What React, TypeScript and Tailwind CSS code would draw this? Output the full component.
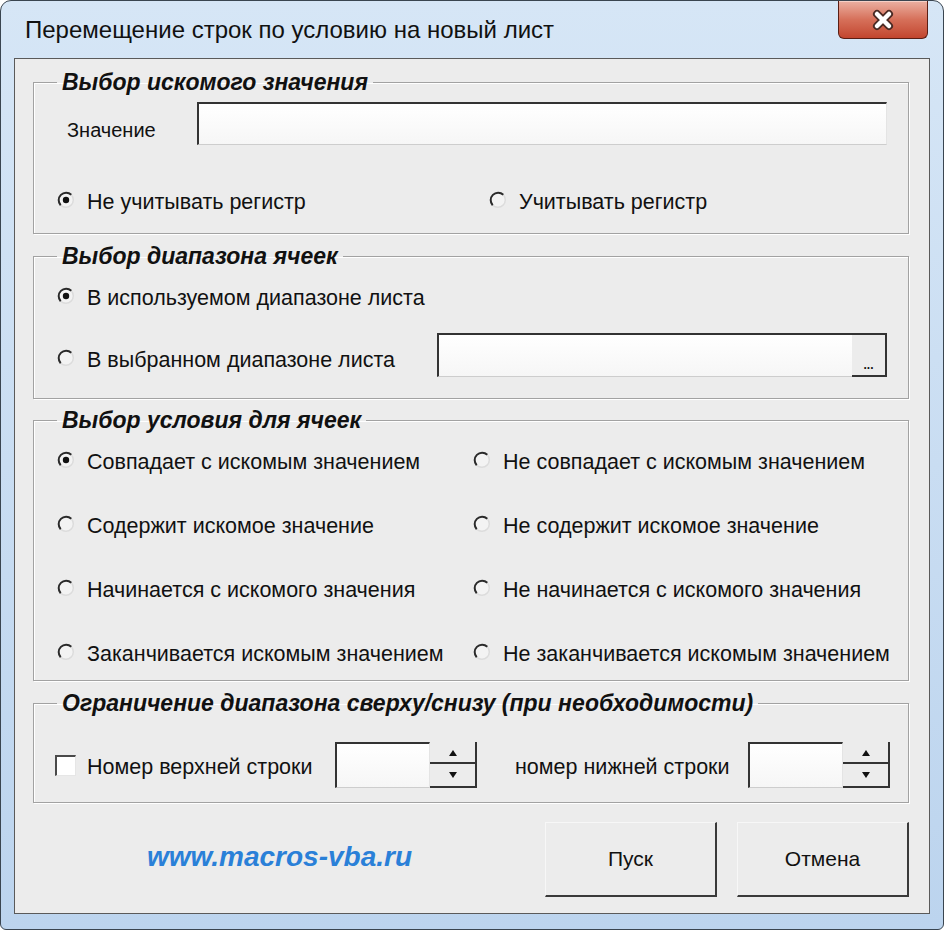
import { FC, ReactNode } from 'react'

const sunken =
  'border-t-2 border-l-2 border-r border-b border-t-[#333] border-l-[#333] border-r-[#e4e4e4] border-b-[#cdcdcd] bg-gradient-to-b from-white to-[#f6f6f6]'

const Radio: FC<{ checked?: boolean }> = ({ checked }) => (
  <svg width="18" height="18" viewBox="0 0 18 18" className="shrink-0">
    <circle cx="9" cy="9" r="7.5" fill="#f3f3f3" />
    <path d="M3.7 14.3 A7.5 7.5 0 0 0 14.3 3.7" fill="none" stroke="#dcdcdc" strokeWidth="1.5" />
    <path d="M14.3 3.7 A7.5 7.5 0 0 0 3.7 14.3" fill="none" stroke="#2a2a2a" strokeWidth="2" />
    {checked && <circle cx="9" cy="9" r="3.2" fill="#111" />}
  </svg>
)

const Option: FC<{ label: string; checked?: boolean; className?: string }> = ({
  label,
  checked,
  className = '',
}) => (
  <div className={`flex h-[30px] items-center gap-[12px] ${className}`}>
    <Radio checked={checked} />
    <span className="whitespace-nowrap pt-[4px]">{label}</span>
  </div>
)

const Group: FC<{ title: string; className: string; children: ReactNode }> = ({
  title,
  className,
  children,
}) => (
  <fieldset
    className={`border border-[#a2a2a2] shadow-[inset_1px_1px_0_#fff,1px_1px_0_#fff] ${className}`}
  >
    <legend className="ml-[23px] px-[5px] text-[23px] leading-[24px] font-bold italic text-[#111]">
      {title}
    </legend>
    {children}
  </fieldset>
)

const Triangle: FC<{ up?: boolean }> = ({ up }) => (
  <svg width="10" height="6" viewBox="0 0 10 6">
    <path d={up ? 'M1 6 L5 0 L9 6 Z' : 'M1 0 L9 0 L5 6 Z'} fill="#111" />
  </svg>
)

const SpinBox: FC = () => (
  <div className="flex h-[46px]">
    <div className={`w-[95px] ${sunken}`} />
    <div className="flex w-[47px] flex-col border-r-2 border-r-[#333] bg-[#ececec]">
      <div className="flex h-[22px] items-center justify-center border-b-2 border-b-[#333] pt-[2px]">
        <Triangle up />
      </div>
      <div className="flex h-[24px] items-center justify-center border-b-2 border-b-[#333]">
        <Triangle />
      </div>
    </div>
  </div>
)

const DialogButton: FC<{ label: string }> = ({ label }) => (
  <button
    type="button"
    className="flex h-[75px] w-[172px] items-center justify-center border-t border-l border-r-2 border-b-2 border-t-[#f7f7f7] border-l-[#f7f7f7] border-r-[#3a3a3a] border-b-[#3a3a3a] bg-[#ececec] text-[21px] text-[#111]"
  >
    {label}
  </button>
)

export default function App() {
  return (
    <div className="flex h-[930px] w-[944px] flex-col overflow-hidden rounded-t-[11px] rounded-b-[6px] border border-[#3a4550] bg-gradient-to-b from-[#d6e6f6] via-[#c9ddf2] to-[#bcd4ee] font-['Liberation_Sans',Arial,sans-serif] text-[#111]">
      <div className="flex h-[57px] shrink-0 items-start justify-between pr-[15px]">
        <div className="pl-[24px] pt-[15px] text-[24px] leading-[28px]">
          Перемещение строк по условию на новый лист
        </div>
        <div className="flex h-[38px] w-[90px] items-center justify-center rounded-b-[6px] border border-t-0 border-[#5a1e14] bg-gradient-to-b from-[#eab0a2] via-[#d6705a] to-[#c2452e] shadow-[inset_0_1px_0_#f6d0c6]">
          <svg width="24" height="22" viewBox="0 0 24 22">
            <path d="M6 5 L18 17 M18 5 L6 17" stroke="#4a2a24" strokeWidth="8" strokeLinecap="round" />
            <path d="M6 5 L18 17 M18 5 L6 17" stroke="#fff" strokeWidth="4.5" strokeLinecap="round" />
          </svg>
        </div>
      </div>

      <div className="mx-[13px] flex h-[856px] shrink-0 flex-col border border-[#5a5a5a] bg-[#ececec] pr-[20px] pl-[18px] text-[21.5px]">
        <Group title="Выбор искомого значения" className="mt-[11px] h-[164px]">
          <div className="flex flex-col pl-[23px]">
            <div className="mt-[8px] flex h-[43px] items-center">
              <span className="w-[140px] pt-[12px] pl-[10px] text-[20px]">Значение</span>
              <div className={`h-[43px] w-[690px] ${sunken}`} />
            </div>
            <div className="mt-[40px] flex">
              <Option label="Не учитывать регистр" checked className="w-[432px]" />
              <Option label="Учитывать регистр" />
            </div>
          </div>
        </Group>

        <Group title="Выбор диапазона ячеек" className="mt-[10px] h-[155px]">
          <div className="flex flex-col pl-[23px]">
            <Option label="В используемом диапазоне листа" checked className="mt-[13px]" />
            <div className="mt-[22px] flex h-[44px] items-center">
              <Option label="В выбранном диапазоне листа" className="w-[380px] pt-[6px]" />
              <div className="flex h-[44px] w-[450px]">
                <div className="flex-1 border-t-2 border-l-2 border-b border-t-[#333] border-l-[#333] border-b-[#cdcdcd] bg-gradient-to-b from-white to-[#f6f6f6]" />
                <div className="flex w-[35px] items-end justify-center border-t-2 border-r-2 border-b-2 border-t-[#333] border-r-[#333] border-b-[#333] bg-[#ececec] pb-[4px] text-[12px] leading-[12px] font-bold">
                  ...
                </div>
              </div>
            </div>
          </div>
        </Group>

        <Group title="Выбор условия для ячеек" className="mt-[9px] h-[273px]">
          <div className="mt-[13px] grid grid-cols-[416px_1fr] gap-y-[34px] pl-[23px]">
            <Option label="Совпадает с искомым значением" checked />
            <Option label="Не совпадает с искомым значением" />
            <Option label="Содержит искомое значение" />
            <Option label="Не содержит искомое значение" />
            <Option label="Начинается с искомого значения" />
            <Option label="Не начинается с искомого значения" />
            <Option label="Заканчивается искомым значением" />
            <Option label="Не заканчивается искомым значением" />
          </div>
        </Group>

        <Group
          title="Ограничение диапазона сверху/снизу (при необходимости)"
          className="mt-[10px] h-[112px]"
        >
          <div className="mt-[27px] flex h-[46px] items-center pl-[21px]">
            <div className="h-[21px] w-[21px] border-t-2 border-l-2 border-r border-b border-t-[#4a4a4a] border-l-[#4a4a4a] border-r-[#e6e6e6] border-b-[#e6e6e6] bg-white" />
            <span className="ml-[11px] w-[248px] pt-[4px]">Номер верхней строки</span>
            <SpinBox />
            <span className="ml-[38px] w-[233px] pt-[4px]">номер нижней строки</span>
            <SpinBox />
          </div>
        </Group>

        <div className="mt-[19px] flex items-center">
          <a
            href="#"
            className="ml-[114px] w-[398px] pb-[6px] text-[28px] font-bold italic text-[#2a80d8]"
          >
            www.macros-vba.ru
          </a>
          <div className="flex gap-[20px]">
            <DialogButton label="Пуск" />
            <DialogButton label="Отмена" />
          </div>
        </div>
      </div>
    </div>
  )
}
